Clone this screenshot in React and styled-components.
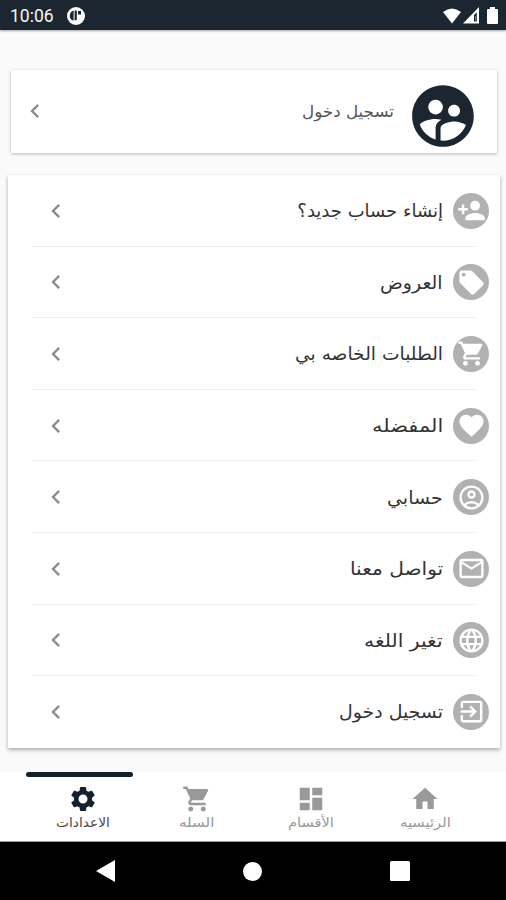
import { useLayoutEffect, useRef, useState } from "react";
import styled, { createGlobalStyle } from "styled-components";
import {
  MdChevronLeft,
  MdDashboard,
  MdExitToApp,
  MdFavorite,
  MdHome,
  MdLanguage,
  MdLocalOffer,
  MdOutlineAccountCircle,
  MdOutlineEmail,
  MdPersonAdd,
  MdSettings,
  MdSupervisedUserCircle,
} from "react-icons/md";

const GlobalStyle = createGlobalStyle`
  *,
  *::before {
    box-sizing: border-box;
  }

  body {
    margin: 0;
    background-color: #fafafa;
    font-family: "DejaVu Sans", sans-serif;
  }

  svg {
    display: block;
    flex-shrink: 0;
  }
`;

const Screen = styled.div`
  display: flex;
  flex-direction: column;
  width: 506px;
  height: 900px;
  overflow: hidden;
  background-color: #fafafa;
`;

const StatusBar = styled.header`
  display: flex;
  align-items: center;
  justify-content: space-between;
  height: 30px;
  padding: 1px 8px 0 10px;
  background-color: #1b2631;
  box-shadow: 0 1px 2px rgba(0, 0, 0, 0.35);
`;

const StatusGroup = styled.div`
  display: flex;
  align-items: center;
  gap: ${({ $gap }) => $gap}px;
`;

const Clock = styled.span`
  color: #f4f6f8;
  font-family: Roboto, sans-serif;
  font-size: 17.5px;
  line-height: 28px;
`;

const Content = styled.main`
  flex: 1;
  padding: 40px 6px 0 8px;
`;

const LoginCard = styled.section`
  display: flex;
  align-items: center;
  direction: rtl;
  height: 83px;
  margin: 0 3px;
  padding: 9px 17px 0 15px;
  background-color: #fff;
  box-shadow: 0 1px 3px rgba(0, 0, 0, 0.28);

  & > svg:first-child {
    color: #1b2631;
  }

  & > svg:last-child {
    margin: -10px auto 0 -5px;
    color: #8c8c8c;
  }

  & > span {
    margin-top: -8px;
  }
`;

const Menu = styled.ul`
  direction: rtl;
  height: 573px;
  margin: 22px 0 0;
  padding: 0;
  list-style: none;
  background-color: #fff;
  box-shadow: 0 2px 4px rgba(0, 0, 0, 0.32);
`;

const MenuItem = styled.li`
  display: grid;
  grid-template-columns: 23px 1fr 28px;
  align-items: center;
  column-gap: 10px;
  height: 71.6px;
  margin: 0 24px;
  padding-top: 1px;
  border-bottom: 1px solid ${({ $last }) => ($last ? "transparent" : "#efefef")};

  & > svg {
    color: #8c8c8c;
    margin-right: -10px;
  }
`;

const Badge = styled.span`
  display: grid;
  place-items: center;
  width: 36px;
  height: 36px;
  margin-right: -13px;
  border-radius: 50%;
  overflow: hidden;
  background-color: #b1b1b1;
  color: #fff;
`;

const LabelBox = styled.span`
  display: block;
  direction: rtl;
  width: ${({ $width }) => $width}px;
  height: ${({ $size }) => $size * 1.4}px;
  margin-right: ${({ $start = 0 }) => $start}px;
  color: ${({ $color }) => $color};
  font-size: ${({ $size }) => $size}px;
  line-height: 1.4;
  white-space: nowrap;
`;

const LabelText = styled.span`
  display: inline-block;
  transform-origin: right center;
`;

const TabBar = styled.nav`
  display: grid;
  grid-template-columns: repeat(4, 114px);
  height: 70px;
  padding-left: 26px;
  background-color: #fff;
  border-bottom: 1px solid #9a9a9a;
`;

const Tab = styled.div`
  position: relative;
  display: flex;
  flex-direction: column;
  align-items: center;
  padding-top: 12px;
  color: ${({ $active }) => ($active ? "#14202c" : "#999")};

  &::before {
    content: "";
    display: ${({ $active }) => ($active ? "block" : "none")};
    position: absolute;
    top: 0;
    left: 0;
    width: 107px;
    height: 5px;
    border-radius: 3px;
    background-color: #14202c;
  }
`;

const SystemBar = styled.footer`
  display: flex;
  align-items: center;
  justify-content: space-between;
  height: 58px;
  padding: 0 96px 0 96px;
  background-color: #000;
`;

// Squeezes or stretches a label so that it takes exactly its given width.
function Label({ children, width, size = 18, color = "#333", start }) {
  const textRef = useRef(null);
  const [scale, setScale] = useState(1);

  useLayoutEffect(() => {
    setScale(width / textRef.current.offsetWidth);
  }, [width]);

  return (
    <LabelBox $width={width} $size={size} $color={color} $start={start}>
      <LabelText ref={textRef} style={{ transform: `scaleX(${scale})` }}>
        {children}
      </LabelText>
    </LabelBox>
  );
}

function CartIcon({ size }) {
  return (
    <svg width={size} height={size} viewBox="0 0 24 24" fill="currentColor">
      <path d="M7 18c-1.1 0-2 .9-2 2s.9 2 2 2 2-.9 2-2-.9-2-2-2zM1 2v2h2l3.6 7.59-1.35 2.45C5.09 14.32 5 14.65 5 15c0 1.1.9 2 2 2h12v-2H7.42c-.14 0-.25-.11-.25-.25l.03-.12.9-1.63h7.45c.75 0 1.41-.41 1.75-1.03l3.58-6.49A1 1 0 0 0 20 4H5.21l-.94-2H1zM17 18c-1.1 0-2 .9-2 2s.9 2 2 2 2-.9 2-2-.9-2-2-2z" />
    </svg>
  );
}

const menuItems = [
  { text: "إنشاء حساب جديد؟", width: 146, Icon: MdPersonAdd },
  { text: "العروض", width: 63, Icon: MdLocalOffer },
  { text: "الطلبات الخاصه بي", width: 148, Icon: CartIcon },
  { text: "المفضله", width: 71, Icon: MdFavorite },
  { text: "حسابي", width: 56, Icon: MdOutlineAccountCircle },
  { text: "تواصل معنا", width: 93, Icon: MdOutlineEmail },
  { text: "تغير اللغه", width: 79, Icon: MdLanguage },
  { text: "تسجيل دخول", width: 104, Icon: MdExitToApp },
];

const tabs = [
  { text: "الاعدادات", width: 54, Icon: MdSettings, active: true },
  { text: "السله", width: 35, Icon: CartIcon },
  { text: "الأقسام", width: 46, Icon: MdDashboard },
  { text: "الرئيسيه", width: 51, Icon: MdHome },
];

function App() {
  return (
    <>
      <GlobalStyle />
      <Screen>
        <StatusBar>
          <StatusGroup $gap={13}>
            <Clock>10:06</Clock>
            <svg width="18" height="18" viewBox="0 0 18 18">
              <circle cx="9" cy="9" r="9" fill="#fff" />
              <path
                d="M6.6 3.6v10.2C4 13.2 2.8 11.2 2.8 9s1.2-4.8 3.8-5.4zM7.6 3.4h2.2v9.8H7.6zM11 4h3v3.6h-3z"
                fill="#1b2631"
              />
            </svg>
          </StatusGroup>
          <StatusGroup $gap={2}>
            <svg width="18" height="16" viewBox="0 0 18 16">
              <path d="M0 4Q9-3 18 4L9 15.5z" fill="#fff" />
            </svg>
            <svg width="16" height="17" viewBox="0 0 16 17">
              <path
                d="M0 16.5L16 0v16.5zM11 8v6.5h2.8V5.2z"
                fill="#fff"
                fillRule="evenodd"
              />
              <path d="M12 9h1v4.5h-1z" fill="#fff" opacity="0.4" />
            </svg>
            <svg width="17" height="17" viewBox="0 0 17 17">
              <path
                d="M9 0h5v2h2q1 0 1 1v13q0 1-1 1H7q-1 0-1-1V3q0-1 1-1h2z"
                fill="#fff"
              />
            </svg>
          </StatusGroup>
        </StatusBar>

        <Content>
          <LoginCard>
            <MdSupervisedUserCircle size={74} />
            <Label width={92} size={16} color="#555" start={12}>
              تسجيل دخول
            </Label>
            <MdChevronLeft size={28} />
          </LoginCard>

          <Menu>
            {menuItems.map(({ text, width, Icon }, i) => (
              <MenuItem key={i} $last={i === menuItems.length - 1}>
                <Badge>
                  <Icon size={29} />
                </Badge>
                <Label width={width}>{text}</Label>
                <MdChevronLeft size={28} />
              </MenuItem>
            ))}
          </Menu>
        </Content>

        <TabBar>
          {tabs.map(({ text, width, Icon, active }) => (
            <Tab key={text} $active={active}>
              <Icon size={30} />
              <Label
                width={width}
                size={13}
                color={active ? "#4a4a4a" : "#999"}
              >
                {text}
              </Label>
            </Tab>
          ))}
        </TabBar>

        <SystemBar>
          <svg width="19" height="22" viewBox="0 0 19 22">
            <path d="M19 0v22L0 11z" fill="#fff" />
          </svg>
          <svg width="19" height="19" viewBox="0 0 19 19">
            <circle cx="9.5" cy="9.5" r="9.5" fill="#fff" />
          </svg>
          <svg width="20" height="20" viewBox="0 0 20 20">
            <rect width="20" height="20" rx="1.5" fill="#fff" />
          </svg>
        </SystemBar>
      </Screen>
    </>
  );
}

export default App;
